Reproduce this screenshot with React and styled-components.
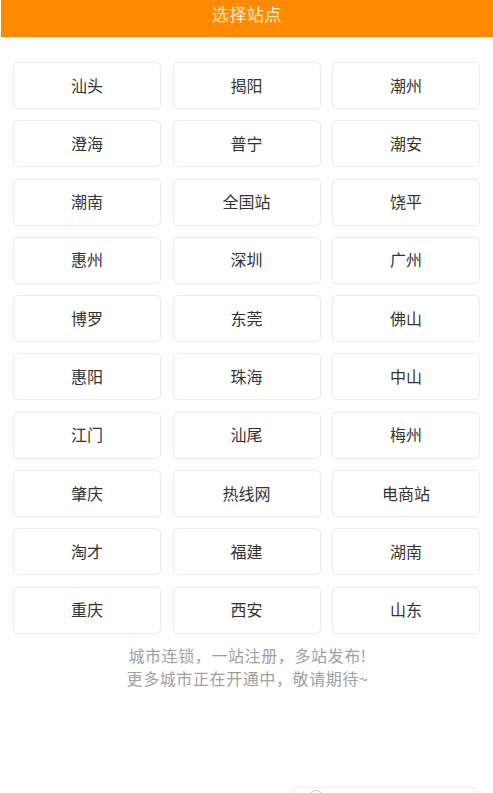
import React from "react";
import styled, { createGlobalStyle } from "styled-components";

const Global = createGlobalStyle`
  html, body { margin: 0; padding: 0; background: #fff; }
  body { font-family: "Noto Sans CJK SC", "Noto Sans", sans-serif; }
`;

const Page = styled.div`
  width: 493px;
  height: 793px;
  overflow: hidden;
  position: relative;
  background: #fff;
  display: flex;
  flex-direction: column;
`;

const Header = styled.header`
  height: 37px;
  margin-left: 1px;
  background: #ff8a00;
  display: flex;
  align-items: flex-start;
  justify-content: center;
  box-shadow: 0 1px 1px rgba(0,0,0,0.06);
`;

const Title = styled.h1`
  margin: 0;
  margin-top: 2px;
  font-size: 17px;
  font-weight: 400;
  line-height: 24px;
  color: #ffe9cc;
  letter-spacing: 0.5px;
`;

const Grid = styled.div`
  display: grid;
  grid-template-columns: repeat(3, 148px);
  grid-auto-rows: 47px;
  column-gap: 11.5px;
  row-gap: 11.3px;
  padding: 25px 13px 0 13px;
`;

const Station = styled.button`
  border: 1px solid #ececec;
  border-radius: 5px;
  background: #fff;
  font-family: "Noto Sans CJK SC", sans-serif;
  font-size: 16px;
  color: #333;
  display: flex;
  align-items: center;
  justify-content: center;
  padding: 0 0 2px 0;
  box-shadow: 0 0 2px rgba(0,0,0,0.03);
`;

const Note = styled.div`
  margin-top: 10px;
  text-align: center;
  font-size: 16px;
  letter-spacing: 0.6px;
  line-height: 23px;
  color: #a0a0a0;
  padding-left: 2px;
`;

const Floating = styled.div`
  position: absolute;
  left: 293px;
  top: 787px;
  width: 182px;
  height: 30px;
  border: 1px solid #eee;
  border-radius: 4px;
  background: #fff;
`;

const Circle = styled.div`
  position: absolute;
  left: 14px;
  top: 2px;
  width: 14px;
  height: 14px;
  border: 1px solid #ccc;
  border-radius: 50%;
`;

const cities = [
  "汕头", "揭阳", "潮州",
  "澄海", "普宁", "潮安",
  "潮南", "全国站", "饶平",
  "惠州", "深圳", "广州",
  "博罗", "东莞", "佛山",
  "惠阳", "珠海", "中山",
  "江门", "汕尾", "梅州",
  "肇庆", "热线网", "电商站",
  "淘才", "福建", "湖南",
  "重庆", "西安", "山东",
];

export default function App() {
  return (
    <Page>
      <Global />
      <Header>
        <Title>选择站点</Title>
      </Header>
      <Grid>
        {cities.map((c) => (
          <Station key={c}>{c}</Station>
        ))}
      </Grid>
      <Note>
        城市连锁，一站注册，多站发布!
        <br />
        更多城市正在开通中，敬请期待~
      </Note>
      <Floating>
        <Circle />
      </Floating>
    </Page>
  );
}
